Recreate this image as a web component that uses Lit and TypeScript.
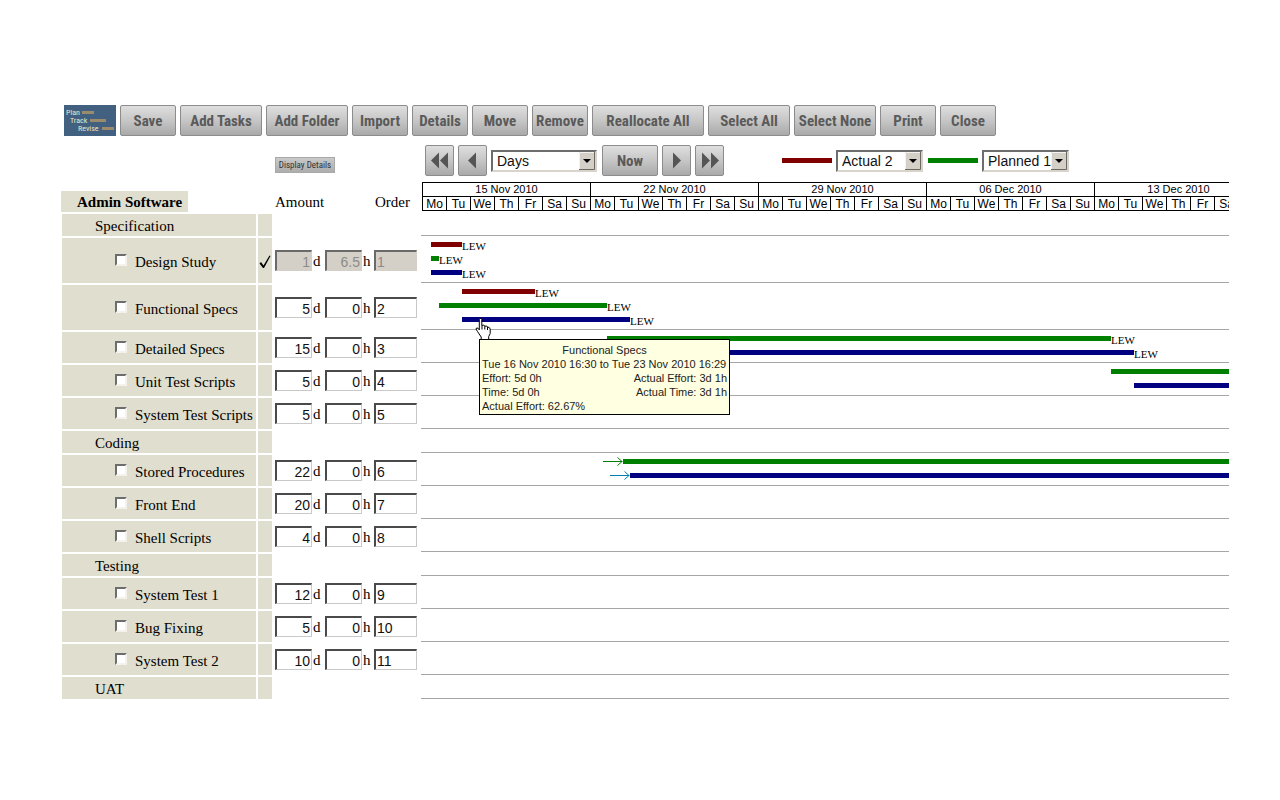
import { LitElement, html, css, svg, nothing } from "lit";
import { customElement, state } from "lit/decorators.js";

type Tone = "red" | "green" | "blue";

interface Bar {
  tone: Tone;
  start: number;
  length: number;
  who?: string;
  linked?: boolean;
}

interface Row {
  name: string;
  folder?: boolean;
  done?: boolean;
  days?: string;
  hours?: string;
  order?: string;
  lanes?: Bar[];
  tip?: boolean;
}

const BEYOND = 2000;
const DAYS = ["Mo", "Tu", "We", "Th", "Fr", "Sa", "Su"];
const WEEKS = ["15 Nov 2010", "22 Nov 2010", "29 Nov 2010", "06 Dec 2010", "13 Dec 2010"];

const ROWS: Row[] = [
  { name: "Specification", folder: true },
  {
    name: "Design Study", done: true, days: "1", hours: "6.5", order: "1",
    lanes: [
      { tone: "red", start: 10, length: 31, who: "LEW" },
      { tone: "green", start: 10, length: 8, who: "LEW" },
      { tone: "blue", start: 10, length: 31, who: "LEW" },
    ],
  },
  {
    name: "Functional Specs", days: "5", hours: "0", order: "2", tip: true,
    lanes: [
      { tone: "red", start: 41, length: 73, who: "LEW" },
      { tone: "green", start: 18, length: 168, who: "LEW" },
      { tone: "blue", start: 41, length: 168, who: "LEW" },
    ],
  },
  {
    name: "Detailed Specs", days: "15", hours: "0", order: "3",
    lanes: [
      { tone: "green", start: 186, length: 504, who: "LEW" },
      { tone: "blue", start: 209, length: 504, who: "LEW" },
    ],
  },
  {
    name: "Unit Test Scripts", days: "5", hours: "0", order: "4",
    lanes: [
      { tone: "green", start: 690, length: BEYOND },
      { tone: "blue", start: 713, length: BEYOND },
    ],
  },
  { name: "System Test Scripts", days: "5", hours: "0", order: "5" },
  { name: "Coding", folder: true },
  {
    name: "Stored Procedures", days: "22", hours: "0", order: "6",
    lanes: [
      { tone: "green", start: 202, length: BEYOND, linked: true },
      { tone: "blue", start: 209, length: BEYOND, linked: true },
    ],
  },
  { name: "Front End", days: "20", hours: "0", order: "7" },
  { name: "Shell Scripts", days: "4", hours: "0", order: "8" },
  { name: "Testing", folder: true },
  { name: "System Test 1", days: "12", hours: "0", order: "9" },
  { name: "Bug Fixing", days: "5", hours: "0", order: "10" },
  { name: "System Test 2", days: "10", hours: "0", order: "11" },
  { name: "UAT", folder: true },
];

const ACTIONS: [string, string][] = [
  ["Save", "s"], ["Add Tasks", "m"], ["Add Folder", "m"], ["Import", "s"], ["Details", "s"],
  ["Move", "s"], ["Remove", "s"], ["Reallocate All", "l"], ["Select All", "m"],
  ["Select None", "m"], ["Print", "s"], ["Close", "s"],
];

@customElement("app-root")
export class AppRoot extends LitElement {
  @state() private rows = ROWS;

  static styles = css`
    :host {
      display: block;
      box-sizing: border-box;
      min-height: 100vh;
      padding: 105px 49px 60px 60px;
      background: #fff;
      color: #000;
      font-family: "Liberation Serif", serif;
      font-size: 15px;
      line-height: 18px;
    }
    * { box-sizing: border-box; }
    .toolbar { display: flex; gap: 4px; padding-left: 4px; }
    .logo { display: block; width: 52px; height: 31px; flex: none; background: #42607f; }
    .btn {
      flex: none;
      height: 31px;
      padding: 0;
      display: flex;
      align-items: center;
      justify-content: center;
      border: 1px solid #8c8c8c;
      border-radius: 2px;
      background: linear-gradient(#dedede, #c6c6c6 50%, #a9a9a9);
      color: #5a5a5a;
      font: bold 15px/20px "Liberation Sans Narrow", "Roboto Condensed", "Liberation Sans", sans-serif;
      white-space: nowrap;
    }
    .s { width: 56px; }
    .m { width: 82px; }
    .l { width: 112px; }
    .icon { width: 29px; }
    .controls { display: flex; padding: 0 0 0 215px; margin-top: 9px; align-items: center; }
    .tiny {
      width: 60px;
      height: 16px;
      margin-top: 9px;
      border-radius: 0;
      border-color: #a9a9a9;
      background: linear-gradient(#c9c9c9, #adadad);
      font-size: 9px;
      line-height: 12px;
      font-weight: normal;
      color: #333;
    }
    .nav { display: flex; align-items: center; gap: 4px; margin-left: 90px; }
    .nav .s { margin-left: 1px; }
    .legend { display: flex; align-items: center; gap: 4px; margin-left: 58px; }
    .swatch { width: 50px; height: 5px; }
    .swatch.green { margin-left: 1px; }
    .red { background: #800000; }
    .green { background: #008000; }
    .blue { background: #000080; }
    .pick { position: relative; display: block; height: 22px; }
    .pick select {
      appearance: none;
      display: block;
      width: 100%;
      height: 22px;
      margin: 0;
      padding: 0 0 0 4px;
      border: 2px solid;
      border-color: #6d6d6d #d8d4cc #d8d4cc #6d6d6d;
      border-radius: 0;
      background: #fff;
      color: #111;
      font: 14px/18px "Liberation Sans", sans-serif;
    }
    .pick svg { position: absolute; right: 2px; top: 2px; pointer-events: none; }
    .wide { width: 106px; }
    .narrow { width: 87px; }
    table {
      width: 100%;
      margin-top: 4px;
      table-layout: fixed;
      border-collapse: separate;
      border-spacing: 2px;
    }
    .c-name { width: 194px; }
    .c-done { width: 14px; }
    .c-amount { width: 97px; }
    .c-order { width: 46px; }
    th, td { padding: 0; text-align: left; font-weight: normal; vertical-align: middle; }
    .head th { height: 30px; vertical-align: bottom; }
    .head .label { padding: 0 0 1px 1px; }
    .head .right { text-align: right; padding: 0 9px 1px 0; }
    .project {
      display: inline-block;
      height: 21px;
      padding: 1px 6px 0 16px;
      margin-left: -1px;
      background: #e0dece;
      font-weight: bold;
      line-height: 20px;
      vertical-align: bottom;
    }
    .name, .done { background: #e0dece; }
    .folder .name { padding: 2px 0 0 33px; height: 22px; }
    .task .name { height: 31px; }
    .task label { display: flex; align-items: center; padding: 2px 0 0 53px; white-space: nowrap; }
    .task label input {
      appearance: none;
      width: 12px;
      height: 12px;
      margin: 0 8px 4px 0;
      border: 2px solid;
      border-color: #6d6d6d #f4f2ea #f4f2ea #6d6d6d;
      background: #fff;
    }
    .done svg { display: block; margin: 2px 0 0 1px; }
    .amount { padding-left: 1px; }
    .fields { display: flex; align-items: center; }
    .field {
      width: 37px;
      height: 21px;
      margin: 0;
      padding: 1px 1px 0;
      border: 1px solid;
      border-color: #4a4a4a #c9c9c9 #c9c9c9 #4a4a4a;
      border-top-width: 2px;
      border-left-width: 2px;
      border-radius: 0;
      background: #fff;
      color: #111;
      font: 14px/18px "Liberation Sans", sans-serif;
      text-align: right;
    }
    .field.order { width: 43px; margin-left: 1px; text-align: left; display: block; }
    .field:disabled { background: #d4d0c8; color: #8d8b86; border-color: #6a6a6a #d4d0c8 #d4d0c8 #6a6a6a; }
    .unit { flex: none; width: 13px; padding: 1px 0 0 1px; }
    .fields .field { flex: none; }
    .plot { position: relative; vertical-align: top; border-bottom: 1px solid #a6a6a6; }
    .lanes { overflow: hidden; padding-bottom: 2px; }
    .lane { display: flex; height: 14px; align-items: center; }
    .bar { flex: none; height: 5px; margin-top: -1px; }
    .link { flex: none; display: block; }
    .who { font-size: 11px; line-height: 14px; padding-top: 1px; }
    .calendar {
      overflow: hidden;
      margin-left: 1px;
      border: 1px solid #000;
      border-right: 0;
      height: 29px;
      margin-bottom: 1px;
      font: 11px/13px "Liberation Sans", sans-serif;
      text-align: center;
    }
    .weeks { display: flex; }
    .week { flex: none; width: 168px; border-right: 1px solid #000; height: 27px; }
    .days { display: flex; border-top: 1px solid #000; }
    .day { width: 24px; height: 13px; border-right: 1px solid #000; font-size: 12px; line-height: 15px; }
    .day:last-child { width: 23px; border-right: 0; }
    .tip {
      position: absolute;
      z-index: 2;
      top: 54px;
      left: 58px;
      width: 251px;
      height: 76px;
      padding: 3px 2px;
      border: 1px solid #000;
      background: #ffffe1;
      color: #222;
      font: 11px/14px "Liberation Sans", sans-serif;
      white-space: nowrap;
    }
    .tip p { margin: 0; display: flex; justify-content: space-between; }
    .tip .title { justify-content: center; }
    .hand { position: absolute; z-index: 3; top: 32px; left: 53px; }
  `;

  private logo() {
    return html`<svg class="logo" viewBox="0 0 52 31" role="img" aria-label="Plan Track Revise">
      <rect x="18" y="6" width="12" height="3" fill="#9b8b6d" />
      <rect x="26" y="14" width="16" height="3" fill="#9b8b6d" />
      <rect x="38" y="22" width="12" height="3" fill="#9b8b6d" />
      <g fill="#e8e6c8" font-family="Roboto Condensed, Liberation Sans, sans-serif" font-size="8">
        <text x="2" y="10">Plan</text>
        <text x="6" y="18">Track</text>
        <text x="14" y="26">Revise</text>
      </g>
    </svg>`;
  }

  private arrow(label: string, points: string[]) {
    return html`<button class="btn icon" aria-label=${label}>
      <svg width="27" height="29" viewBox="0 0 27 29" fill="#555">
        ${points.map((p) => svg`<polygon points=${p} />`)}
      </svg>
    </button>`;
  }

  private pick(label: string, size: string, options: string[]) {
    return html`<span class="pick ${size}">
      <select aria-label=${label}>${options.map((o) => html`<option>${o}</option>`)}</select>
      <svg width="16" height="18" viewBox="0 0 16 18">
        <rect width="16" height="18" fill="#d4d0c8" />
        <path d="M0.5 17V0.5H15" fill="none" stroke="#f4f2ee" />
        <path d="M15.5 0V17.5H0" fill="none" stroke="#6b6862" />
        <path d="M4 7h8l-4 4z" fill="#000" />
      </svg>
    </span>`;
  }

  private bar(b: Bar) {
    const lead = b.linked ? 20 : 0;
    return html`<div class="lane" style="padding-left:${b.start - lead}px">
      ${b.linked
        ? html`<svg class="link" width="20" height="10" viewBox="0 0 20 10" fill="none" stroke=${b.tone === "green" ? "#008000" : "#0080b0"}>
            <path d="M0 4.5H19.5M14.5 0.5L19 4.5L14.5 8.5" />
          </svg>`
        : nothing}
      <span class="bar ${b.tone}" style="width:${b.length}px"></span>
      ${b.who ? html`<span class="who">${b.who}</span>` : nothing}
    </div>`;
  }

  private tip() {
    return html`
      <svg class="hand" width="18" height="24" viewBox="0 0 18 24">
        <path
          d="M5.5 1.5h1.5l.8 1v6l2-.4 1 1 2 0 .8 1 1.6.3 1 1.6v4.5l-1.5 3v3H7.2v-2.5L3.5 14.5l-1.5-2.500.5-1 1.500.2 1.300 1.700V2.500z"
          fill="#fff" stroke="#000" />
        <path d="M8 8.500v4M10.800 9v3.500M13.500 10v3" fill="none" stroke="#000" />
      </svg>
      <div class="tip" role="tooltip">
        <p class="title">Functional Specs</p>
        <p>Tue 16 Nov 2010 16:30 to Tue 23 Nov 2010 16:29</p>
        <p><span>Effort: 5d 0h</span><span>Actual Effort: 3d 1h</span></p>
        <p><span>Time: 5d 0h</span><span>Actual Time: 3d 1h</span></p>
        <p>Actual Effort: 62.67%</p>
      </div>`;
  }

  private row(r: Row) {
    if (r.folder) {
      return html`<tr class="folder">
        <td class="name">${r.name}</td><td class="done"></td><td></td><td></td><td class="plot"></td>
      </tr>`;
    }
    return html`<tr class="task">
      <td class="name"><label><input type="checkbox" />${r.name}</label></td>
      <td class="done">
        ${r.done
          ? html`<svg width="13" height="15" viewBox="0 0 13 15" role="img" aria-label="Complete">
              <path d="M0.500 9.500L2 8L4.500 11.500L10.500 1.500L11.500 2L5 14H4z" fill="#000" />
            </svg>`
          : nothing}
      </td>
      <td class="amount">
        <div class="fields">
          <input class="field" aria-label="${r.name} days" .value=${r.days ?? ""} ?disabled=${!!r.done} />
          <span class="unit">d</span>
          <input class="field" aria-label="${r.name} hours" .value=${r.hours ?? ""} ?disabled=${!!r.done} />
          <span class="unit">h</span>
        </div>
      </td>
      <td><input class="field order" aria-label="${r.name} order" .value=${r.order ?? ""} ?disabled=${!!r.done} /></td>
      <td class="plot">
        <div class="lanes">${(r.lanes ?? []).map((b) => this.bar(b))}</div>
        ${r.tip ? this.tip() : nothing}
      </td>
    </tr>`;
  }

  render() {
    return html`
      <div class="toolbar">
        ${this.logo()}
        ${ACTIONS.map(([t, size]) => html`<button class="btn ${size}">${t}</button>`)}
      </div>
      <div class="controls">
        <button class="btn tiny">Display Details</button>
        <div class="nav">
          ${this.arrow("Back a page", ["5,14.5 13,6.5 13,22.5", "14,14.5 22,6.5 22,22.5"])}
          ${this.arrow("Back", ["9,14.5 17,6.5 17,22.5"])}
          ${this.pick("Scale", "wide", ["Days", "Weeks", "Months"])}
          <button class="btn s">Now</button>
          ${this.arrow("Forward", ["18,14.5 10,6.5 10,22.5"])}
          ${this.arrow("Forward a page", ["14,14.5 6,6.5 6,22.5", "23,14.5 15,6.5 15,22.5"])}
        </div>
        <div class="legend">
          <span class="swatch red"></span>
          ${this.pick("First comparison", "narrow", ["Actual 2", "Actual 1"])}
          <span class="swatch green"></span>
          ${this.pick("Second comparison", "narrow", ["Planned 1", "Planned 2"])}
        </div>
      </div>
      <table>
        <colgroup>
          <col class="c-name" /><col class="c-done" /><col class="c-amount" /><col class="c-order" /><col />
        </colgroup>
        <thead>
          <tr class="head">
            <th colspan="2"><span class="project">Admin Software</span></th>
            <th class="label">Amount</th>
            <th class="right">Order</th>
            <th>
              <div class="calendar">
                <div class="weeks">
                  ${WEEKS.map((w) => html`<div class="week">${w}
                    <div class="days">${DAYS.map((d) => html`<div class="day">${d}</div>`)}</div>
                  </div>`)}
                </div>
              </div>
            </th>
          </tr>
        </thead>
        <tbody>${this.rows.map((r) => this.row(r))}</tbody>
      </table>
    `;
  }
}
